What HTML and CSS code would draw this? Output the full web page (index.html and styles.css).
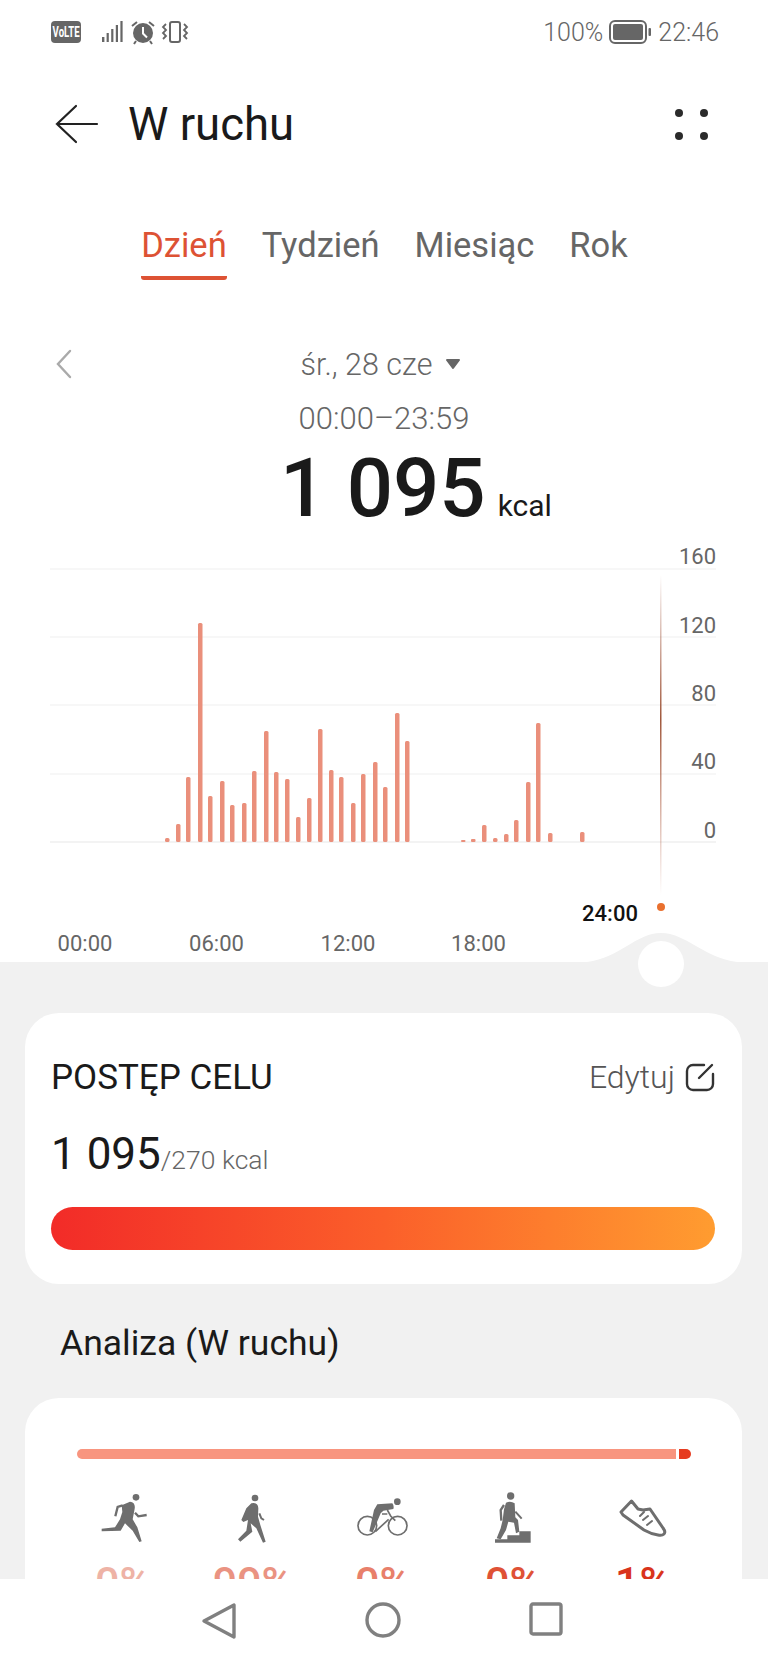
FILE: index.html
```html
<!DOCTYPE html>
<html lang="pl">
<head>
<meta charset="utf-8">
<title>W ruchu</title>
<link rel="stylesheet" href="styles.css">
</head>
<body>
<div class="phone">
  <main class="main">
    <div class="status">
      <div class="status-left">
        <div class="volte"><span class="volte-text">VoLTE</span></div>
        <svg class="ic-signal" width="24" height="24" viewBox="0 0 24 24" fill="#666"><rect x="1" y="17" width="2.4" height="5"/><rect x="5.6" y="13" width="2.2" height="9"/><rect x="10.2" y="9" width="2.2" height="13"/><rect x="14.8" y="5" width="2.2" height="17"/><rect x="19.4" y="1" width="2.2" height="21"/></svg>
        <svg width="26" height="26" viewBox="0 0 26 26"><circle cx="13" cy="14" r="10" fill="#666"/><path d="M13 8v6.5l4 4" fill="none" stroke="#fff" stroke-width="2"/><path d="M2 7l5-4M24 7l-5-4M6 22l-2 3M20 22l2 3" stroke="#666" stroke-width="2" fill="none"/></svg>
        <svg width="28" height="26" viewBox="0 0 28 26" fill="none" stroke="#666" stroke-width="2"><rect x="9" y="3" width="10" height="20" rx="2"/><path d="M5 5l-3 3 3 3-3 3 3 3-3 3M23 5l3 3-3 3 3 3-3 3 3 3" stroke-width="1.8"/></svg>
      </div>
      <div class="status-right">
        <span>100%</span>
        <svg width="42" height="24" viewBox="0 0 42 24"><rect x="1" y="1" width="36" height="22" rx="5" fill="none" stroke="#666" stroke-width="2"/><rect x="4" y="4" width="30" height="16" rx="2" fill="#666"/><rect x="39.5" y="8" width="2.5" height="8" rx="1" fill="#666"/></svg>
        <span>22:46</span>
      </div>
    </div>

    <header class="header">
      <svg class="back" width="44" height="40" viewBox="0 0 44 40" fill="none" stroke="#222" stroke-width="2.2" stroke-linecap="round"><path d="M21 2L2 20l19 18M2 20h40"/></svg>
      <h1 class="title">W ruchu</h1>
      <div class="dots"><i></i><i></i><i></i><i></i></div>
    </header>

    <nav class="tabs">
      <a class="tab tab-active">Dzień</a>
      <a class="tab">Tydzień</a>
      <a class="tab">Miesiąc</a>
      <a class="tab">Rok</a>
    </nav>

    <div class="date-row">
      <svg class="chev" width="16" height="30" viewBox="0 0 16 30" fill="none" stroke="#aaa" stroke-width="2.4" stroke-linecap="round"><path d="M14 2L2 15l12 13"/></svg>
      <div class="date">śr., 28 cze<svg class="tri" width="16" height="12" viewBox="0 0 16 12"><path d="M2 2h12L8 10z" fill="#666" stroke="#666" stroke-width="2" stroke-linejoin="round"/></svg></div>
    </div>
    <div class="range">00:00–23:59</div>
    <div class="total"><span class="total-num">1 095</span><span class="total-unit">kcal</span></div>

    <svg class="chart" width="768" height="453" viewBox="0 540 768 453">
      <defs>
        <linearGradient id="cur" x1="0" y1="0" x2="0" y2="1">
          <stop offset="0" stop-color="#a0523a" stop-opacity="0"/>
          <stop offset=".45" stop-color="#a0583c"/>
          <stop offset="1" stop-color="#c06a50" stop-opacity="0"/>
        </linearGradient>
      </defs>
      <g stroke="#f0f0f0" stroke-width="1.2">
        <path d="M50 569H716M50 637H716M50 705H716M50 774H716"/>
        <path d="M50 842H716" stroke="#e8e8e8"/>
      </g>
      <g class="axis-y" text-anchor="end">
        <text x="716" y="564">160</text>
        <text x="716" y="633">120</text>
        <text x="716" y="701">80</text>
        <text x="716" y="769">40</text>
        <text x="716" y="838">0</text>
      </g>
      <g fill="#ea8f7b">
        <rect x="165" y="838" width="4.5" height="4" rx="1.5"/>
        <rect x="176" y="824" width="4.5" height="18" rx="1.5"/>
        <rect x="186" y="777" width="4.5" height="65" rx="1.5"/>
        <rect x="198" y="623" width="4.5" height="219" rx="1.5"/>
        <rect x="208" y="796" width="4.5" height="46" rx="1.5"/>
        <rect x="220" y="781" width="4.5" height="61" rx="1.5"/>
        <rect x="230" y="805" width="4.5" height="37" rx="1.5"/>
        <rect x="242" y="803" width="4.5" height="39" rx="1.5"/>
        <rect x="252" y="771" width="4.5" height="71" rx="1.5"/>
        <rect x="264" y="731" width="4.5" height="111" rx="1.5"/>
        <rect x="274" y="772" width="4.5" height="70" rx="1.5"/>
        <rect x="285" y="779" width="4.5" height="63" rx="1.5"/>
        <rect x="296" y="817" width="4.5" height="25" rx="1.5"/>
        <rect x="307" y="798" width="4.5" height="44" rx="1.5"/>
        <rect x="318" y="729" width="4.5" height="113" rx="1.5"/>
        <rect x="329" y="770" width="4.5" height="72" rx="1.5"/>
        <rect x="339" y="777" width="4.5" height="65" rx="1.5"/>
        <rect x="351" y="803" width="4.5" height="39" rx="1.5"/>
        <rect x="361" y="774" width="4.5" height="68" rx="1.5"/>
        <rect x="373" y="762" width="4.5" height="80" rx="1.5"/>
        <rect x="383" y="787" width="4.5" height="55" rx="1.5"/>
        <rect x="395" y="713" width="4.5" height="129" rx="1.5"/>
        <rect x="405" y="741" width="4.5" height="101" rx="1.5"/>
        <rect x="461" y="840" width="4.5" height="2" rx="1"/>
        <rect x="471" y="839" width="4.5" height="3" rx="1"/>
        <rect x="482" y="825" width="4.5" height="17" rx="1.5"/>
        <rect x="493" y="838" width="4.5" height="4" rx="1.5"/>
        <rect x="504" y="834" width="4.5" height="8" rx="1.5"/>
        <rect x="514" y="820" width="4.5" height="22" rx="1.5"/>
        <rect x="526" y="782" width="4.5" height="60" rx="1.5"/>
        <rect x="536" y="723" width="4.5" height="119" rx="1.5"/>
        <rect x="548" y="833" width="4.5" height="9" rx="1.5"/>
        <rect x="580" y="832" width="4.5" height="10" rx="1.5"/>
      </g>
      <rect x="660" y="575" width="1.5" height="320" fill="url(#cur)"/>
      <circle cx="661" cy="907" r="4" fill="#e9702f"/>
      <text class="time-now" x="610" y="921" text-anchor="middle">24:00</text>
      <g class="axis-x" text-anchor="middle">
        <text x="85" y="951">00:00</text>
        <text x="216.500" y="951">06:00</text>
        <text x="348" y="951">12:00</text>
        <text x="478.500" y="951">18:00</text>
      </g>
      <path d="M0 962H587C620 958 636 933 661 933C686 933 704 958 737 962H768V993H0Z" fill="#f1f1f1"/>
      <circle cx="661" cy="964" r="23" fill="#fff"/>
    </svg>

    <section class="gray">
      <div class="card card-goal">
        <div class="goal-head">
          <h2 class="goal-title">POSTĘP CELU</h2>
          <div class="edit">Edytuj
            <svg width="30" height="30" viewBox="0 0 30 30" fill="none" stroke="#333" stroke-width="2.4" stroke-linecap="round"><path d="M19 3H8a6 6 0 0 0-6 6v13a6 6 0 0 0 6 6h14a6 6 0 0 0 6-6V12"/><path d="M14 16L27 3"/></svg>
          </div>
        </div>
        <div class="goal-val"><span class="goal-num">1 095</span><span class="goal-of">/270 kcal</span></div>
        <div class="goal-bar"></div>
      </div>

      <h2 class="analysis">Analiza (W ruchu)</h2>

      <div class="card card-activity">
        <div class="split"><div class="split-a"></div><div class="split-b"></div></div>
        <div class="acts">
          <div class="act">
            <svg width="60" height="60" viewBox="0 0 180 180" fill="#6e6e6e"><g transform="translate(-39 -60)"><circle cx="168" cy="82" r="10"/><path d="M125 106L150 95Q167 97 164 116L158 148L172 172L185 214L178 216L158 182L135 160L122 182L65 184V176L105 172L120 148L127 126Z"/><path d="M165 128L175 139L200 135M128 106L113 111L106 139" fill="none" stroke="#6e6e6e" stroke-width="7"/></g></svg>
            <span class="pct pct-1">0%</span>
          </div>
          <div class="act">
            <svg width="60" height="60" viewBox="0 0 180 180" fill="#6e6e6e"><g transform="translate(-435 -60)"><circle cx="531" cy="84" r="10"/><path d="M520 100Q540 95 541 115L540 140L547 165L563 215L555 218L535 175L518 160L523 185L487 215L480 208L505 182L510 150L496 156L490 150L505 115Z"/><path d="M544 130L550 145L558 150" fill="none" stroke="#6e6e6e" stroke-width="6"/></g></svg>
            <span class="pct pct-2">99%</span>
          </div>
          <div class="act">
            <svg width="60" height="60" viewBox="0 0 180 180" fill="#6e6e6e"><g transform="translate(-9 0)"><circle cx="52" cy="107" r="28" fill="none" stroke="#6e6e6e" stroke-width="5"/><circle cx="143" cy="107" r="28" fill="none" stroke="#6e6e6e" stroke-width="5"/><circle cx="142" cy="35" r="10"/><path d="M82 43L127 40Q133 48 130 57L100 62L92 70L68 127L58 124L72 60Z"/><path d="M112 60L122 78L136 92M76 125L116 88M96 72H112" fill="none" stroke="#6e6e6e" stroke-width="5"/></g></svg>
            <span class="pct pct-3">0%</span>
          </div>
          <div class="act">
            <svg width="60" height="60" viewBox="0 0 180 180" fill="#6e6e6e"><g transform="translate(-309 -60)"><circle cx="392" cy="78" r="11"/><path d="M378 98Q392 92 404 100L406 142L414 150L418 185L408 190L402 158L385 155L378 180L362 208L350 205L362 175L368 150L372 118Z"/><path d="M372 105L362 120L364 152" fill="none" stroke="#6e6e6e" stroke-width="7"/><path d="M406 125L425 146" fill="none" stroke="#6e6e6e" stroke-width="6"/><path d="M345 218V208H382V196H418V184H452V218Z"/></g></svg>
            <span class="pct pct-4">0%</span>
          </div>
          <div class="act">
            <svg width="60" height="60" viewBox="0 0 60 60" fill="none" stroke="#6e6e6e" stroke-width="3" stroke-linejoin="round" stroke-linecap="round"><path d="M8 22L18.500 11L25 19L30 20L37 19L50 38Q53 42 51 44Q49 46 45 45Q38 44 31 40L10 25Z"/><path d="M31 22L27 26M35 26L30 30M39 31L34 35" stroke-width="2"/></svg>
            <span class="pct pct-5">1%</span>
          </div>
        </div>
      </div>
    </section>
  </main>

  <footer class="navbar">
    <svg width="36" height="38" viewBox="0 0 36 38" fill="none" stroke="#808080" stroke-width="3.400" stroke-linejoin="round"><path d="M33 3V35L3 19Z"/></svg>
    <svg width="36" height="36" viewBox="0 0 36 36" fill="none" stroke="#808080" stroke-width="3.400"><circle cx="18" cy="18" r="16"/></svg>
    <svg width="34" height="34" viewBox="0 0 34 34" fill="none" stroke="#808080" stroke-width="3.400" stroke-linejoin="round"><rect x="2" y="2" width="30" height="30" rx="2"/></svg>
  </footer>
</div>
</body>
</html>
```

FILE: styles.css
```css
* { box-sizing: border-box; margin: 0; padding: 0; }
html, body { background: #fff; }
body { font-family: Roboto, "Noto Sans", sans-serif; color: #1a1a1a; }

.phone { width: 768px; height: 1664px; display: flex; flex-direction: column; overflow: hidden; background: #fff; }
.main { flex: 1; min-height: 0; overflow: hidden; }

.status { height: 64px; padding: 20px 49px 0 51px; display: flex; justify-content: space-between; align-items: flex-start; color: #666; font-size: 25px; font-weight: 300; }
.status-left { display: flex; align-items: center; height: 24px; gap: 5px; }
.volte { width: 30px; height: 22px; border-radius: 4px; background: #666; display: flex; align-items: center; justify-content: center; }
.volte-text { display: block; font-size: 15px; font-weight: 700; line-height: 22px; color: #fff; transform: scale(.64, 1); }
.ic-signal { margin-left: 15px; }
.status-right { display: flex; align-items: center; height: 24px; gap: 6px; }
.status-right svg { margin-right: 1px; }

.header { height: 120px; padding: 0 60px 0 55px; display: flex; align-items: center; }
.back { flex: none; }
.title { margin-left: 29px; font-size: 45.5px; font-weight: 400; color: #1a1a1a; flex: 1; }
.dots { width: 33px; display: grid; grid-template-columns: 8px 8px; justify-content: space-between; row-gap: 15px; }
.dots i { display: block; width: 8px; height: 8px; border-radius: 50%; background: #2b2b2b; }

.tabs { height: 96px; padding: 38px 0 0 1px; display: flex; justify-content: center; gap: 35px; font-size: 34.5px; color: #666; font-weight: 400; }
.tab { height: 58px; line-height: 46px; }
.tab-active { color: #dd5234; border-bottom: 4px solid #dd5234; border-radius: 0 0 3px 3px; }

.date-row { margin-top: 66px; padding: 0 62px 0 56px; display: grid; grid-template-columns: 1fr auto 1fr; align-items: center; height: 36px; }
.chev { grid-column: 1; }
.date { grid-column: 2; display: flex; align-items: center; gap: 13px; font-size: 30.5px; font-weight: 300; color: #666; }
.range { margin-top: 19px; text-align: center; font-size: 31px; font-weight: 300; color: #666; line-height: 36px; }
.total { height: 86px; margin: 8px 0 9px; padding-left: 64px; display: flex; justify-content: center; align-items: baseline; gap: 12px; line-height: 86px; }
.total-num { font-size: 81.5px; font-weight: 500; color: #1a1a1a; }
.total-unit { font-size: 30px; color: #1a1a1a; }

.chart { display: block; }
.axis-y text { font-size: 22px; font-weight: 400; fill: #666; }
.axis-x text { font-size: 22px; font-weight: 400; fill: #666; }
.time-now { font-size: 22px; font-weight: 500; fill: #111; }

.gray { background: #f1f1f1; padding: 20px 26px 0 25px; height: 700px; }
.card { background: #fff; border-radius: 34px; }
.card-goal { height: 271px; padding: 42px 27px 0 26px; }
.goal-head { display: flex; justify-content: space-between; align-items: center; height: 44px; }
.goal-title { font-size: 35px; font-weight: 400; color: #1a1a1a; }
.edit { display: flex; align-items: center; gap: 10px; font-size: 32px; font-weight: 300; color: #555; }
.goal-val { margin-top: 25px; height: 60px; display: flex; align-items: baseline; line-height: 60px; }
.goal-num { font-size: 44px; font-weight: 400; color: #1a1a1a; }
.goal-of { font-size: 26.5px; font-weight: 300; color: #666; }
.goal-bar { margin-top: 23px; height: 43px; border-radius: 22px; background: linear-gradient(90deg, #f22b28, #fb5f2a 50%, #ff9c30); }

.analysis { height: 114px; padding-left: 35px; font-size: 35.5px; font-weight: 400; line-height: 118px; color: #1a1a1a; }

.card-activity { height: 300px; padding: 51px 51px 0 52px; }
.split { display: flex; gap: 3px; height: 10px; }
.split-a { flex: 1; background: #f8957f; border-radius: 5px 0 0 5px; }
.split-b { width: 12px; background: #e63b1f; border-radius: 0 5px 5px 0; }
.acts { margin-top: 31px; margin-left: 16px; margin-right: 18px; display: flex; justify-content: space-between; }
.act { width: 60px; display: flex; flex-direction: column; align-items: center; }
.act svg { display: block; }
.pct { margin-top: 7px; font-size: 43px; font-weight: 500; line-height: 50px; white-space: nowrap; }
.pct-1 { color: #eeb3a6; }
.pct-2 { color: #ea9382; }
.pct-3 { color: #e8806b; }
.pct-4 { color: #df5236; }
.pct-5 { color: #d9341c; }

.navbar { flex: none; height: 85px; background: #fff; display: flex; justify-content: center; align-items: flex-start; padding: 23px 4px 0 0; gap: 128px; }
```
